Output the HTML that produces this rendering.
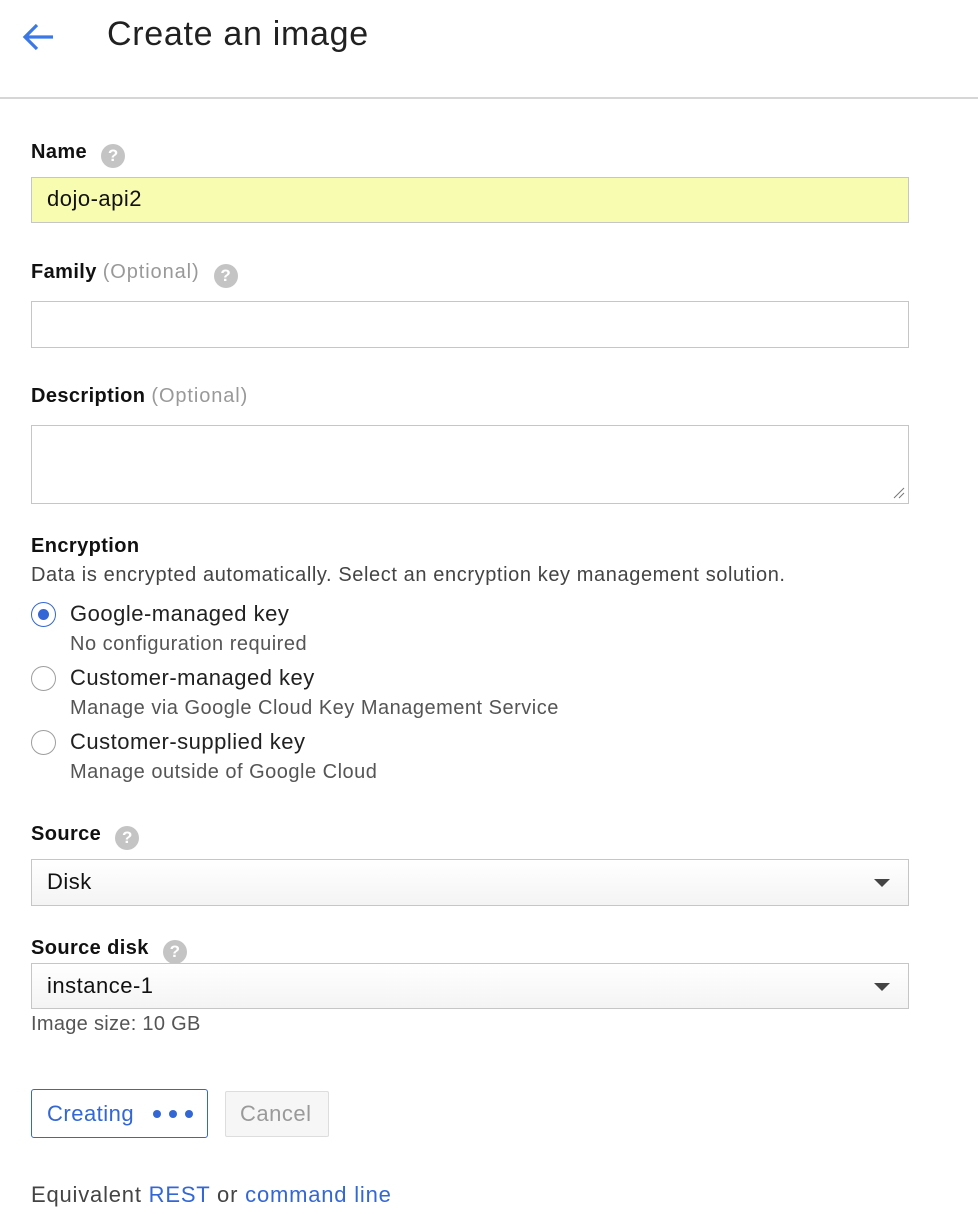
<!DOCTYPE html>
<html><head><style>
body{margin:0;width:978px;height:1214px;background:#fff;font-family:"Liberation Sans",Arial,sans-serif;position:relative;overflow:hidden;color:#212121}
.a{position:absolute;white-space:nowrap}
.lbl{font-size:20px;font-weight:bold;line-height:24px;color:#111;letter-spacing:0.4px}
.opt{font-weight:normal;color:#999;letter-spacing:0.9px}
.q{display:inline-block;width:24px;height:24px;border-radius:50%;background:#c4c4c4;color:#fff;font-size:17px;font-weight:bold;text-align:center;line-height:24px;vertical-align:-3px;margin-left:14px;letter-spacing:0}
.box{position:absolute;left:31px;width:876px;border:1px solid #c6c6c6;box-sizing:content-box}
.t{font-size:22px;line-height:24px;letter-spacing:0.5px}
.sub{font-size:20px;line-height:24px;color:#555;letter-spacing:0.5px}
.radio{position:absolute;left:31px;width:25px;height:25px;border:1.5px solid #9e9e9e;border-radius:50%;box-sizing:border-box;background:#fff}
.sel{background:linear-gradient(#fff,#f4f4f4)}
.tri{position:absolute;right:18px;top:19px;width:0;height:0;border-left:8px solid transparent;border-right:8px solid transparent;border-top:8px solid #444}
</style></head><body>
<svg class="a" style="left:22px;top:22px" width="34" height="30" viewBox="0 0 34 30"><path d="M31 15H4M15 3L3 15l12 12" stroke="#3b78e7" stroke-width="3.2" fill="none"/></svg>
<div class="a" style="left:107px;top:14px;font-size:34px;line-height:40px;color:#212121;letter-spacing:0.7px">Create an image</div>
<div class="a" style="left:0;top:97px;width:978px;height:2px;background:#d6d6d6"></div>

<div class="a lbl" style="left:31px;top:140px">Name<span class="q">?</span></div>
<div class="box" style="top:177px;height:44px;background:#f8fcb0"></div>
<div class="a t" style="left:47px;top:187px;color:#111">dojo-api2</div>

<div class="a lbl" style="left:31px;top:260px">Family <span class="opt">(Optional)</span><span class="q">?</span></div>
<div class="box" style="top:301px;height:45px"></div>

<div class="a lbl" style="left:31px;top:384px">Description <span class="opt">(Optional)</span></div>
<div class="box" style="top:425px;height:77px"></div>
<svg class="a" style="left:893px;top:487px" width="12" height="12"><path d="M1 11L11 1M6 11l5-5" stroke="#777" stroke-width="1"/></svg>

<div class="a lbl" style="left:31px;top:534px">Encryption</div>
<div class="a sub" style="left:31px;top:563px;color:#444;letter-spacing:0.6px">Data is encrypted automatically. Select an encryption key management solution.</div>

<div class="radio" style="top:602px;border-color:#3367d6"><div style="position:absolute;left:5.5px;top:5.5px;width:11px;height:11px;border-radius:50%;background:#3367d6"></div></div>
<div class="a t" style="left:70px;top:602px">Google-managed key</div>
<div class="a sub" style="left:70px;top:632px">No configuration required</div>
<div class="radio" style="top:666px"></div>
<div class="a t" style="left:70px;top:666px">Customer-managed key</div>
<div class="a sub" style="left:70px;top:696px">Manage via Google Cloud Key Management Service</div>
<div class="radio" style="top:730px"></div>
<div class="a t" style="left:70px;top:730px">Customer-supplied key</div>
<div class="a sub" style="left:70px;top:760px">Manage outside of Google Cloud</div>

<div class="a lbl" style="left:31px;top:822px">Source<span class="q">?</span></div>
<div class="box sel" style="top:859px;height:45px"><div class="tri"></div></div>
<div class="a t" style="left:47px;top:870px;color:#111">Disk</div>

<div class="a lbl" style="left:31px;top:936px">Source disk<span class="q">?</span></div>
<div class="box sel" style="top:963px;height:44px"><div class="tri"></div></div>
<div class="a t" style="left:47px;top:974px;color:#111">instance-1</div>
<div class="a sub" style="left:31px;top:1012px;font-size:20px;letter-spacing:0.3px">Image size: 10 GB</div>

<div class="a" style="left:31px;top:1089px;width:175px;height:47px;border:1.5px solid #3367d6;border-radius:3px"></div>
<div class="a t" style="left:47px;top:1102px;color:#3367d6">Creating</div>
<div class="a" style="left:153px;top:1110px;width:8px;height:8px;border-radius:50%;background:#3367d6"></div>
<div class="a" style="left:169px;top:1110px;width:8px;height:8px;border-radius:50%;background:#3367d6"></div>
<div class="a" style="left:185px;top:1110px;width:8px;height:8px;border-radius:50%;background:#3367d6"></div>

<div class="a" style="left:225px;top:1091px;width:102px;height:44px;border:1px solid #ddd;border-radius:2px;background:#f6f6f6"></div>
<div class="a t" style="left:240px;top:1102px;color:#9a9a9a">Cancel</div>

<div class="a t" style="left:31px;top:1183px;color:#444;letter-spacing:0.8px">Equivalent <span style="color:#3367d6">REST</span> or <span style="color:#3367d6">command line</span></div>
</body></html>
